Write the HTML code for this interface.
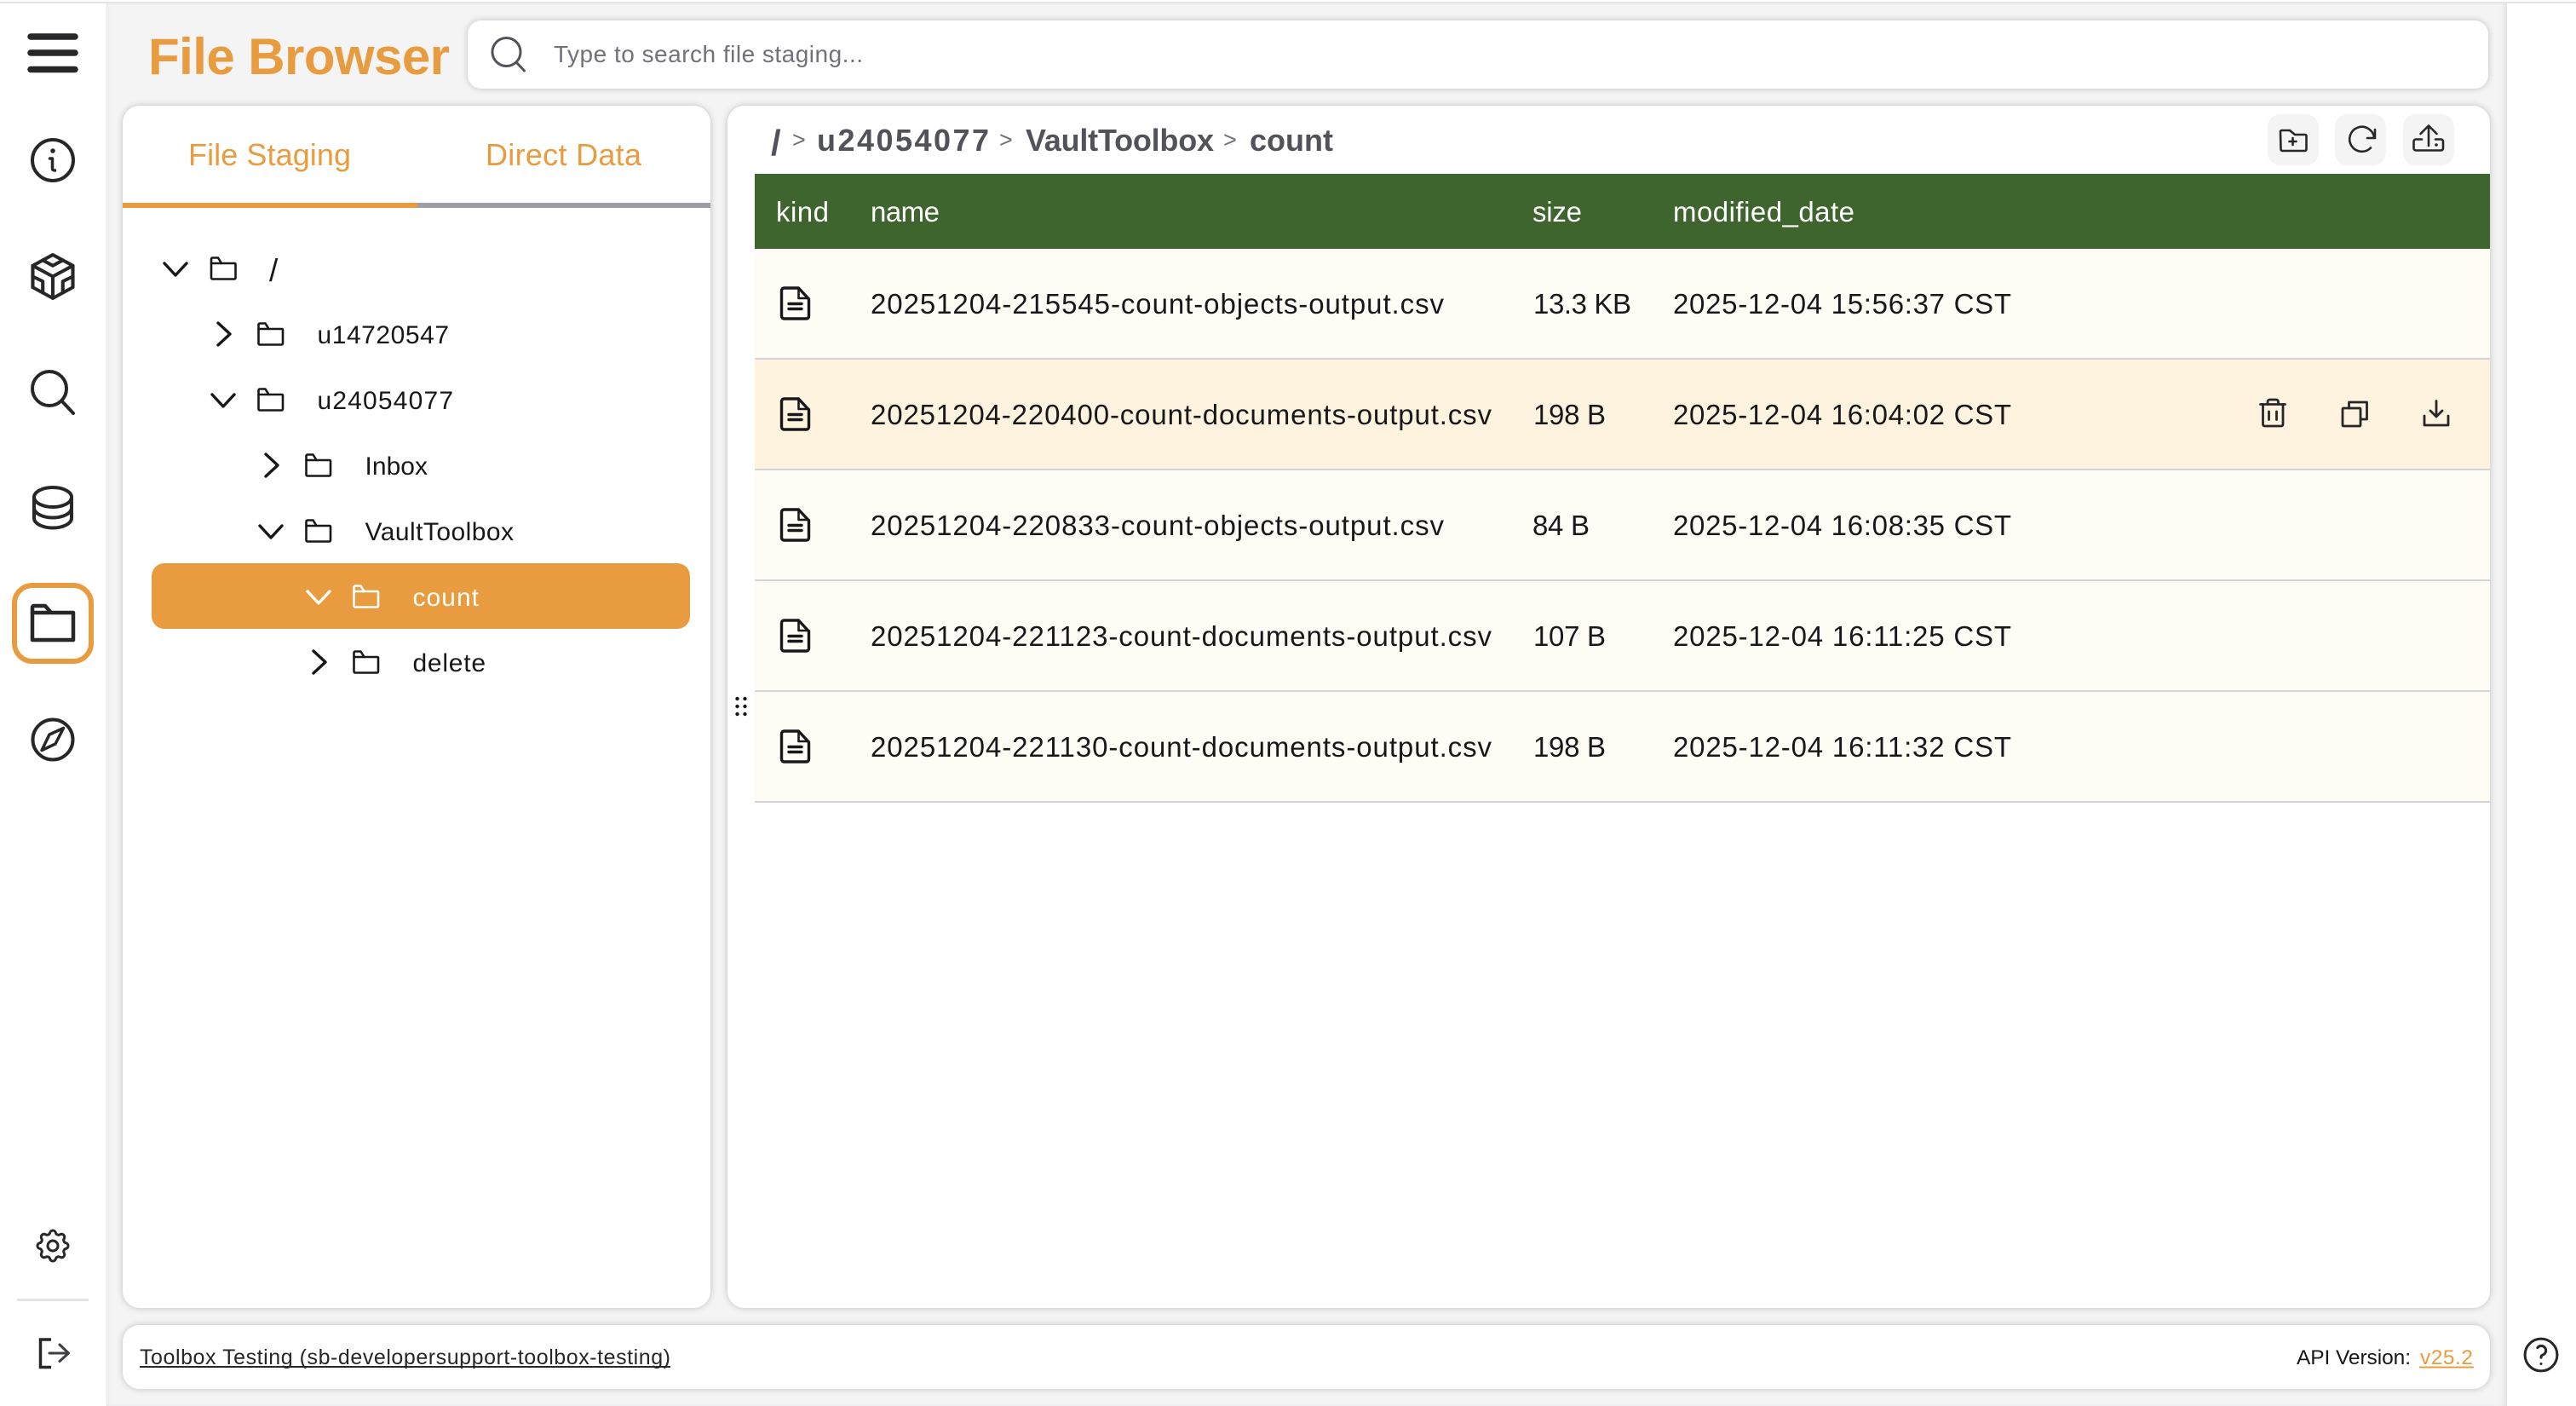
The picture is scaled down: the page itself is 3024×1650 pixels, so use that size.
<!DOCTYPE html>
<html lang="en">
<head>
<meta charset="utf-8">
<title>File Browser</title>
<style>
html,body{margin:0;padding:0;background:#fff;}
body{position:relative;width:3024px;height:1650px;overflow:hidden;font-family:"Liberation Sans",sans-serif;}
div{position:absolute;box-sizing:border-box;}
#top{left:0;top:2px;width:3024px;height:2px;background:#e4e4e7;z-index:3;}
#main{left:125px;top:4px;width:2818px;height:1646px;background:#f4f4f5;box-shadow:inset 3px 0 5px -3px rgba(0,0,0,.1),inset -6px 0 8px -4px rgba(0,0,0,.1);}
.panel{background:#fff;border-radius:20px;box-shadow:0 0 8px rgba(0,0,0,.22);}
.row{left:886px;width:2037px;height:130px;background:#fffcf5;border-bottom:2px solid #d4d4d8;}
svg{position:absolute;left:0;top:0;}
text{font-family:"Liberation Sans",sans-serif;}
</style>
</head>
<body>
<div id="top"></div>
<div id="main"></div>
<div class="panel" style="left:549px;top:24px;width:2372px;height:80px;border-radius:16px"></div>
<div class="panel" style="left:144px;top:124px;width:690px;height:1411px"></div>
<div class="panel" style="left:854px;top:124px;width:2069px;height:1411px"></div>
<div class="panel" style="left:144px;top:1555px;width:2779px;height:75px"></div>
<div style="left:144px;top:238px;width:346px;height:6px;background:#e99c3f"></div>
<div style="left:490px;top:238px;width:344px;height:6px;background:#9e9ea6"></div>
<div style="left:178px;top:661px;width:632px;height:77px;background:#e99c3f;border-radius:15px"></div>
<div style="left:14px;top:684px;width:96px;height:95px;border:6px solid #e99c3f;border-radius:24px"></div>
<div style="left:20px;top:1524px;width:84px;height:3px;background:#e4e4e7"></div>
<div style="left:886px;top:204px;width:2037px;height:88px;background:#3f652e"></div>
<div class="row" style="top:292px"></div>
<div class="row" style="top:422px;background:#fef3df"></div>
<div class="row" style="top:552px"></div>
<div class="row" style="top:682px"></div>
<div class="row" style="top:812px"></div>
<div style="left:2662px;top:134px;width:60px;height:60px;background:#f4f4f5;border-radius:15px"></div>
<div style="left:2741px;top:134px;width:60px;height:60px;background:#f4f4f5;border-radius:15px"></div>
<div style="left:2821px;top:134px;width:60px;height:60px;background:#f4f4f5;border-radius:15px"></div>

<svg width="3024" height="1650" viewBox="0 0 3024 1650" xmlns="http://www.w3.org/2000/svg">
<defs>
<g id="fold" fill="none" stroke-width="2.6" stroke-linejoin="round" stroke-linecap="round">
<path d="M1.5 3a1.5 1.5 0 0 1 1.5-1.5h6.5l4 6.5h15.5a1 1 0 0 1 1 1v16a1.5 1.5 0 0 1-1.5 1.5H3A1.5 1.5 0 0 1 1.5 25z"/>
<path d="M1.5 8h12"/>
</g>
<path id="cd" d="M-13 -7L0 7L13 -7" fill="none" stroke-width="3.4" stroke-linecap="round" stroke-linejoin="round"/>
<path id="cr" d="M-7 -13L7 0L-7 13" fill="none" stroke-width="3.4" stroke-linecap="round" stroke-linejoin="round"/>
<g id="file" fill="none" stroke="#18181b" stroke-width="3.4" stroke-linecap="round" stroke-linejoin="round">
<path d="M4 1.5h17l12 13v20a3 3 0 0 1-3 3H4a3 3 0 0 1-3-3V4.500a3 3 0 0 1 3-3z"/>
<path d="M21 1.500v12h12" stroke-width="2.6"/>
<path d="M9.500 20h15M9.500 26h15"/>
</g>
</defs>

<!-- sidebar -->
<path d="M36 43H88M36 62H88M36 81.500H88" stroke="#27272a" stroke-width="7.500" stroke-linecap="round" fill="none"/>
<g fill="none" stroke="#27272a" stroke-linecap="round" stroke-linejoin="round">
<circle cx="62" cy="188" r="24" stroke-width="4"/>
<path d="M62 177h.01" stroke-width="5.500"/>
<path d="M58.500 186h3v11.500q0 2.500 3 2.500" stroke-width="3.500"/>
</g>
<g transform="translate(26.700,290.500) scale(2.94,2.83)" fill="none" stroke="#27272a" stroke-width="1.400" stroke-linecap="round" stroke-linejoin="round">
<path d="M20 7.500v9l-4 2.250l-4 2.250l-4 -2.250l-4 -2.250v-9l4 -2.250l4 -2.250l4 2.250z"/>
<path d="M12 12l4 -2.250l4 -2.250"/><path d="M12 12l0 9"/><path d="M12 12l-4 -2.250l-4 -2.250"/>
<path d="M20 12l-4 2v4.750"/><path d="M4 12l4 2l0 4.750"/><path d="M8 5.250l4 2.250l4 -2.250"/>
</g>
<g fill="none" stroke="#27272a" stroke-width="4" stroke-linecap="round" stroke-linejoin="round">
<circle cx="58" cy="456" r="20"/>
<path d="M72.500 470.500L86 485"/>
</g>
<g fill="none" stroke="#27272a" stroke-width="4" stroke-linecap="round" stroke-linejoin="round">
<ellipse cx="62" cy="583.500" rx="22" ry="11.500"/>
<path d="M40 583.500V608a22 11.500 0 0 0 44 0V583.500"/>
<path d="M40 596a22 11.500 0 0 0 44 0"/>
</g>
<g fill="none" stroke="#27272a" stroke-width="4.500" stroke-linejoin="round" stroke-linecap="round">
<path d="M38 713a2 2 0 0 1 2-2h13l7 8h26v32H38z"/>
<path d="M38 719h20"/>
</g>
<g fill="none" stroke="#27272a" stroke-linecap="round" stroke-linejoin="round">
<circle cx="62" cy="868" r="23.500" stroke-width="4"/>
<path d="M74.500 854.500L65 873L49 880.500L58 862Z" stroke-width="3.500"/>
</g>
<g transform="translate(38,1438) scale(2)" fill="none" stroke="#27272a" stroke-width="1.500" stroke-linecap="round" stroke-linejoin="round">
<path d="M10.325 4.317c.426 -1.756 2.924 -1.756 3.350 0a1.724 1.724 0 0 0 2.573 1.066c1.543 -.940 3.310 .826 2.370 2.370a1.724 1.724 0 0 0 1.065 2.572c1.756 .426 1.756 2.924 0 3.350a1.724 1.724 0 0 0 -1.066 2.573c.940 1.543 -.826 3.310 -2.370 2.370a1.724 1.724 0 0 0 -2.572 1.065c-.426 1.756 -2.924 1.756 -3.350 0a1.724 1.724 0 0 0 -2.573 -1.066c-1.543 .940 -3.310 -.826 -2.370 -2.370a1.724 1.724 0 0 0 -1.065 -2.572c-1.756 -.426 -1.756 -2.924 0 -3.350a1.724 1.724 0 0 0 1.066 -2.573c-.940 -1.543 .826 -3.310 2.370 -2.370c1 .608 2.296 .070 2.572 -1.065"/>
<path d="M9 12a3 3 0 1 0 6 0a3 3 0 0 0 -6 0"/>
</g>
<path d="M60 1572H47.500V1604.500H60" fill="none" stroke="#27272a" stroke-width="3.500"/>
<path d="M58 1588H80M70 1578L80.500 1588L70 1597.500" fill="none" stroke="#3f3f46" stroke-width="3" stroke-linecap="round" stroke-linejoin="round"/>

<!-- header -->
<text x="174" y="87" font-size="60" font-weight="700" fill="#e99c3f" textLength="354">File Browser</text>
<g fill="none" stroke="#52525b" stroke-width="3" stroke-linecap="round" stroke-linejoin="round">
<circle cx="594.500" cy="61" r="16.500"/>
<path d="M606 73L615.500 83"/>
</g>
<text x="650" y="73" font-size="28" fill="#71717a" textLength="363">Type to search file staging...</text>

<!-- tabs -->
<text x="221" y="194" font-size="36" fill="#e99c3f" textLength="191">File Staging</text>
<text x="570" y="194" font-size="36" fill="#e99c3f" textLength="183">Direct Data</text>

<!-- tree -->
<g stroke="#18181b">
<use href="#cd" x="206" y="316"/>
<use href="#cr" x="263" y="392"/>
<use href="#cd" x="262" y="470"/>
<use href="#cr" x="319" y="546"/>
<use href="#cd" x="318" y="624"/>
<use href="#cr" x="375" y="777"/>
<use href="#fold" x="246.500" y="301"/>
<use href="#fold" x="302" y="378"/>
<use href="#fold" x="302" y="455"/>
<use href="#fold" x="358" y="532"/>
<use href="#fold" x="358" y="609"/>
<use href="#fold" x="414" y="763"/>
</g>
<g stroke="#fff">
<use href="#cd" x="374" y="701"/>
<use href="#fold" x="414" y="686"/>
</g>
<g font-size="30" fill="#18181b">
<text x="316" y="330" font-size="37">/</text>
<text x="372.500" y="403" textLength="154.500">u14720547</text>
<text x="372.500" y="480" textLength="159.500">u24054077</text>
<text x="428.500" y="557" textLength="73.500">Inbox</text>
<text x="428.500" y="634" textLength="174.500">VaultToolbox</text>
<text x="484.500" y="788" textLength="85.500">delete</text>
</g>
<text x="484.500" y="711" font-size="30" fill="#fff" textLength="77.500">count</text>

<!-- grip -->
<g fill="#18181b">
<circle cx="865.500" cy="820" r="2.200"/><circle cx="874.500" cy="820" r="2.200"/>
<circle cx="865.500" cy="829" r="2.200"/><circle cx="874.500" cy="829" r="2.200"/>
<circle cx="865.500" cy="838" r="2.200"/><circle cx="874.500" cy="838" r="2.200"/>
</g>

<!-- breadcrumb -->
<g font-size="36" font-weight="700" fill="#52525b">
<text x="905" y="182" font-size="42">/</text>
<text x="959" y="177" textLength="202">u24054077</text>
<text x="1204" y="177" textLength="221">VaultToolbox</text>
<text x="1467" y="177" textLength="98">count</text>
</g>
<g font-size="27" fill="#71717a">
<text x="930" y="173">&gt;</text>
<text x="1173" y="173">&gt;</text>
<text x="1436" y="173">&gt;</text>
</g>

<!-- toolbar -->
<g fill="none" stroke="#27272a" stroke-width="2.600" stroke-linecap="round" stroke-linejoin="round">
<path d="M2677 154.500a1.500 1.500 0 0 1 1.500-1.500h9.500l6 5h12a1.500 1.500 0 0 1 1.500 1.500v15.500a2 2 0 0 1-2 2h-26a2 2 0 0 1-2-2z"/>
<path d="M2691.500 162v8M2687.500 166h8"/>
<path d="M2787 161A14.500 14.500 0 1 0 2783 173.500"/>
<path d="M2788 152V162H2779"/>
<path d="M2843 163.500H2836a2.500 2.500 0 0 0-2.500 2.500V174a2.500 2.500 0 0 0 2.500 2.500H2865.500a2.500 2.500 0 0 0 2.500-2.500V166a2.500 2.500 0 0 0-2.500-2.500H2859"/>
<path d="M2851 171V148M2841.500 157L2851 147.500L2860.500 157"/>
</g>
<circle cx="2860" cy="170" r="1.800" fill="#27272a"/>

<!-- table header -->
<g font-size="33" fill="#fff">
<text x="911" y="260" textLength="62">kind</text>
<text x="1022" y="260" textLength="81">name</text>
<text x="1799" y="260" textLength="58">size</text>
<text x="1964" y="260" textLength="213">modified_date</text>
</g>

<!-- rows -->
<use href="#file" x="916.500" y="336.500"/>
<use href="#file" x="916.500" y="466.500"/>
<use href="#file" x="916.500" y="596.500"/>
<use href="#file" x="916.500" y="726.500"/>
<use href="#file" x="916.500" y="856.500"/>
<g font-size="33" fill="#18181b">
<text x="1022" y="368" textLength="673">20251204-215545-count-objects-output.csv</text>
<text x="1800" y="368" textLength="115">13.3 KB</text>
<text x="1964" y="368" textLength="397">2025-12-04 15:56:37 CST</text>
<text x="1022" y="498" textLength="729">20251204-220400-count-documents-output.csv</text>
<text x="1800" y="498" textLength="85">198 B</text>
<text x="1964" y="498" textLength="397">2025-12-04 16:04:02 CST</text>
<text x="1022" y="628" textLength="673">20251204-220833-count-objects-output.csv</text>
<text x="1799" y="628" textLength="67">84 B</text>
<text x="1964" y="628" textLength="397">2025-12-04 16:08:35 CST</text>
<text x="1022" y="758" textLength="729">20251204-221123-count-documents-output.csv</text>
<text x="1800" y="758" textLength="85">107 B</text>
<text x="1964" y="758" textLength="397">2025-12-04 16:11:25 CST</text>
<text x="1022" y="888" textLength="729">20251204-221130-count-documents-output.csv</text>
<text x="1800" y="888" textLength="85">198 B</text>
<text x="1964" y="888" textLength="397">2025-12-04 16:11:32 CST</text>
</g>

<!-- row actions -->
<g fill="none" stroke="#27272a" stroke-width="2.800" stroke-linecap="round" stroke-linejoin="round">
<path d="M2653.500 474.500H2682.500"/>
<path d="M2656.500 474.500V498a2 2 0 0 0 2 2H2678a2 2 0 0 0 2-2V474.500"/>
<path d="M2662 474.500V471.500a2.500 2.500 0 0 1 2.500-2.500H2672a2.500 2.500 0 0 1 2.500 2.500V474.500"/>
<path d="M2663.500 483V492.500M2672.500 483V492.500"/>
<rect x="2750" y="479" width="21" height="21" rx="1"/>
<path d="M2757.500 479V472H2778.500V492H2771"/>
<path d="M2846 488V499H2874V488"/>
<path d="M2860 470.500V489M2853 482L2860 489L2867 482"/>
</g>

<!-- footer -->
<text x="164" y="1601" font-size="25" fill="#27272a" textLength="623">Toolbox Testing (sb-developersupport-toolbox-testing)</text>
<rect x="164" y="1603" width="623" height="2" fill="#27272a"/>
<text x="2696" y="1601" font-size="24.500" fill="#18181b" textLength="134">API Version:</text>
<text x="2841" y="1601" font-size="24.500" fill="#e99c3f" textLength="62">v25.2</text>
<rect x="2840" y="1603.500" width="64" height="2" fill="#e99c3f"/>
<g transform="translate(2957.800,1564.800) scale(2.100)" fill="none" stroke="#27272a" stroke-width="1.450" stroke-linecap="round" stroke-linejoin="round">
<path d="M3 12a9 9 0 1 0 18 0a9 9 0 0 0 -18 0"/><path d="M12 17l0 .01"/><path d="M12 13.500a1.500 1.500 0 0 1 1 -1.500a2.600 2.600 0 1 0 -3 -4"/>
</g>
</svg>
</body>
</html>
